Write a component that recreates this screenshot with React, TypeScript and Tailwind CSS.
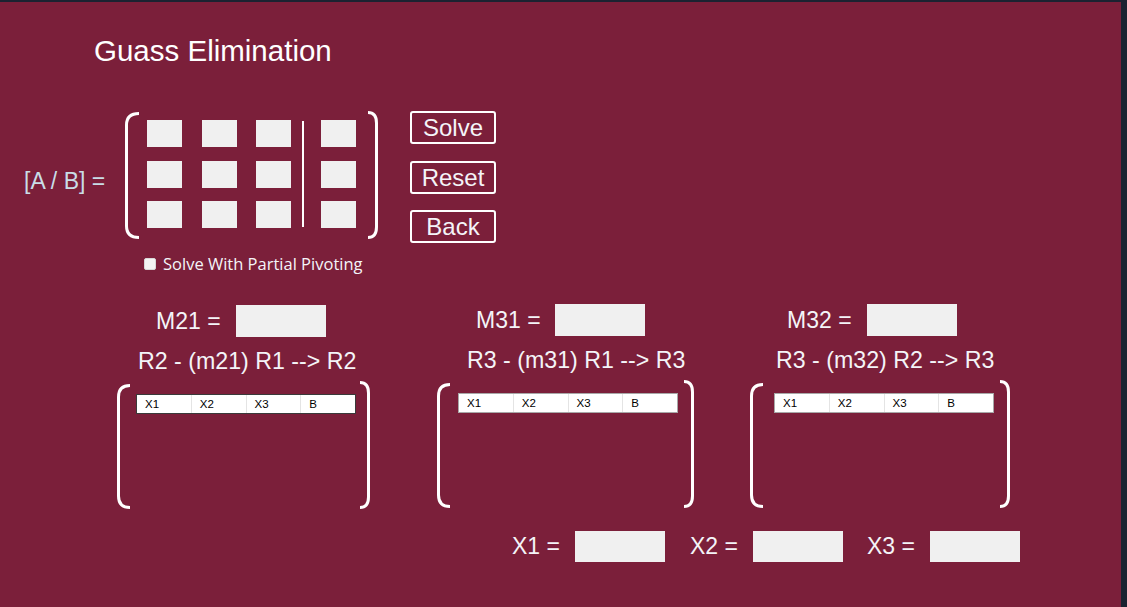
import React from "react";

function LeftBracket({ w, h }: { w: number; h: number }) {
  return (
    <svg width={w} height={h} viewBox={`0 0 ${w} ${h}`} className="block shrink-0">
      <path
        d={`M${w} 1.5 C${w * 0.4} 1.5 1.5 5 1.5 13 V${h - 13} C1.5 ${h - 5} ${w * 0.4} ${h - 1.5} ${w} ${h - 1.5}`}
        fill="none"
        stroke="#ffffff"
        strokeWidth="3"
      />
    </svg>
  );
}

function RightBracket({ w, h }: { w: number; h: number }) {
  return (
    <svg width={w} height={h} viewBox={`0 0 ${w} ${h}`} className="block shrink-0">
      <path
        d={`M0 1.5 C${w * 0.6} 1.5 ${w - 1.5} 5 ${w - 1.5} 12 V${h - 12} C${w - 1.5} ${h - 5} ${w * 0.6} ${h - 1.5} 0 ${h - 1.5}`}
        fill="none"
        stroke="#ffffff"
        strokeWidth="3"
      />
    </svg>
  );
}

function Cell() {
  return <div className="w-[35px] h-[27px] bg-[#f0f0f0]" />;
}

function Table({ borderCls }: { borderCls: string }) {
  const cols = ["X1", "X2", "X3", "B"];
  return (
    <div className={`flex w-[220px] h-[20px] bg-white border ${borderCls}`}>
      {cols.map((c, i) => (
        <div
          key={c}
          className={`flex-1 pl-[8px] text-[11.5px] leading-[18px] text-black ${i < 3 ? "border-r border-[#e4e4e4]" : ""}`}
        >
          {c}
        </div>
      ))}
    </div>
  );
}

function Section({
  wCls,
  labelMl,
  label,
  boxMl,
  formulaMl,
  formula,
  tableMl,
  tableBorder,
}: {
  wCls: string;
  labelMl: string;
  label: string;
  boxMl: string;
  formulaMl: string;
  formula: string;
  tableMl: string;
  tableBorder: string;
}) {
  return (
    <div className={`flex flex-col ${wCls}`}>
      <div className={`flex items-center h-[32px] ${labelMl}`}>
        <span className="text-[23px] leading-[23px] text-[#f4f4f8] whitespace-nowrap">{label}</span>
        <div className={`w-[90px] h-[32px] bg-[#f0f0f0] ${boxMl}`} />
      </div>
      <div className={`mt-[13px] text-[23.2px] leading-[23px] text-[#f4f4f8] whitespace-nowrap ${formulaMl}`}>
        {formula}
      </div>
      <div className="mt-[11px] flex items-start">
        <LeftBracket w={13} h={125} />
        <div className={`mt-[10px] ${tableMl}`}>
          <Table borderCls={tableBorder} />
        </div>
        <div className="flex-1" />
        <div className="-mt-[3px]">
          <RightBracket w={10} h={128} />
        </div>
      </div>
    </div>
  );
}

function XField({ label, ml }: { label: string; ml: string }) {
  return (
    <div className={`flex items-center ${ml}`}>
      <span className="text-[23px] leading-[23px] text-[#f4f4f8] whitespace-nowrap">{label}</span>
      <div className="ml-[15px] w-[90px] h-[31px] bg-[#f0f0f0]" />
    </div>
  );
}

function Btn({ label, cls }: { label: string; cls: string }) {
  return (
    <div
      className={`w-[86px] h-[33px] border-2 border-white rounded-[3px] flex items-center justify-center text-[24px] leading-[24px] text-[#f4f4f8] ${cls}`}
    >
      {label}
    </div>
  );
}

export default function App() {
  return (
    <div className="w-[1127px] h-[607px] bg-[#1b2231] flex flex-col overflow-hidden font-['Liberation_Sans',Arial,sans-serif]">
      <div className="h-[2px] shrink-0" />
      <div className="w-[1121px] flex-1 bg-[#7b1f3a] flex flex-col">
        {/* Title */}
        <div className="mt-[34px] ml-[94px] text-[29.5px] leading-[30px] text-white">Guass Elimination</div>

        {/* Matrix row */}
        <div className="mt-[45px] flex items-start">
          <div className="ml-[24px] w-[101px] mt-[59px] text-[23px] leading-[23px] text-[#c9dde7] whitespace-nowrap">
            [A / B] =
          </div>
          <div className="mt-[1px] flex items-start">
            <LeftBracket w={14} h={127} />
            <div className="ml-[8px] mt-[8px] grid grid-cols-[35px_35px_35px] gap-x-[19.5px] gap-y-[13.5px]">
              {Array.from({ length: 9 }).map((_, i) => (
                <Cell key={i} />
              ))}
            </div>
            <div className="ml-[11px] mt-[9px] w-[2px] h-[106px] bg-white" />
            <div className="ml-[17px] mt-[8px] flex flex-col gap-y-[13.5px]">
              <Cell />
              <Cell />
              <Cell />
            </div>
            <div className="ml-[12px] -mt-[1px]">
              <RightBracket w={10} h={128} />
            </div>
          </div>
          <div className="ml-[32px] flex flex-col">
            <Btn label="Solve" cls="" />
            <Btn label="Reset" cls="mt-[17px]" />
            <Btn label="Back" cls="mt-[16px]" />
          </div>
        </div>

        {/* Checkbox */}
        <div className="mt-[11px] ml-[144px] flex items-center h-[20px]">
          <div className="w-[12px] h-[12px] bg-[#f4f4f4] rounded-[2px] border border-[#d8d8d8]" />
          <span className="ml-[7px] font-['Open_Sans',sans-serif] text-[16.5px] leading-[20px] text-[#f4f4f8] whitespace-nowrap">
            Solve With Partial Pivoting
          </span>
        </div>

        {/* Sections */}
        <div className="mt-[31px] flex items-start">
          <div className="ml-[117px]">
            <Section
              wCls="w-[253px]"
              labelMl="ml-[39px]"
              label="M21 ="
              boxMl="ml-[15px]"
              formulaMl="ml-[21px]"
              formula="R2 - (m21) R1 --> R2"
              tableMl="ml-[6px]"
              tableBorder="border-[#3a3a3a]"
            />
          </div>
          <div className="ml-[67px] -mt-[1px]">
            <Section
              wCls="w-[257px]"
              labelMl="ml-[39px]"
              label="M31 ="
              boxMl="ml-[14px]"
              formulaMl="ml-[30px]"
              formula="R3 - (m31) R1 --> R3"
              tableMl="ml-[8px]"
              tableBorder="border-[#a8a8a8]"
            />
          </div>
          <div className="ml-[56px] -mt-[1px]">
            <Section
              wCls="w-[260px]"
              labelMl="ml-[37px]"
              label="M32 ="
              boxMl="ml-[15px]"
              formulaMl="ml-[26px]"
              formula="R3 - (m32) R2 --> R3"
              tableMl="ml-[11px]"
              tableBorder="border-[#a8a8a8]"
            />
          </div>
        </div>

        {/* X results */}
        <div className="mt-[22px] flex items-center">
          <XField label="X1 =" ml="ml-[512px]" />
          <XField label="X2 =" ml="ml-[25px]" />
          <XField label="X3 =" ml="ml-[24px]" />
        </div>
      </div>
    </div>
  );
}
